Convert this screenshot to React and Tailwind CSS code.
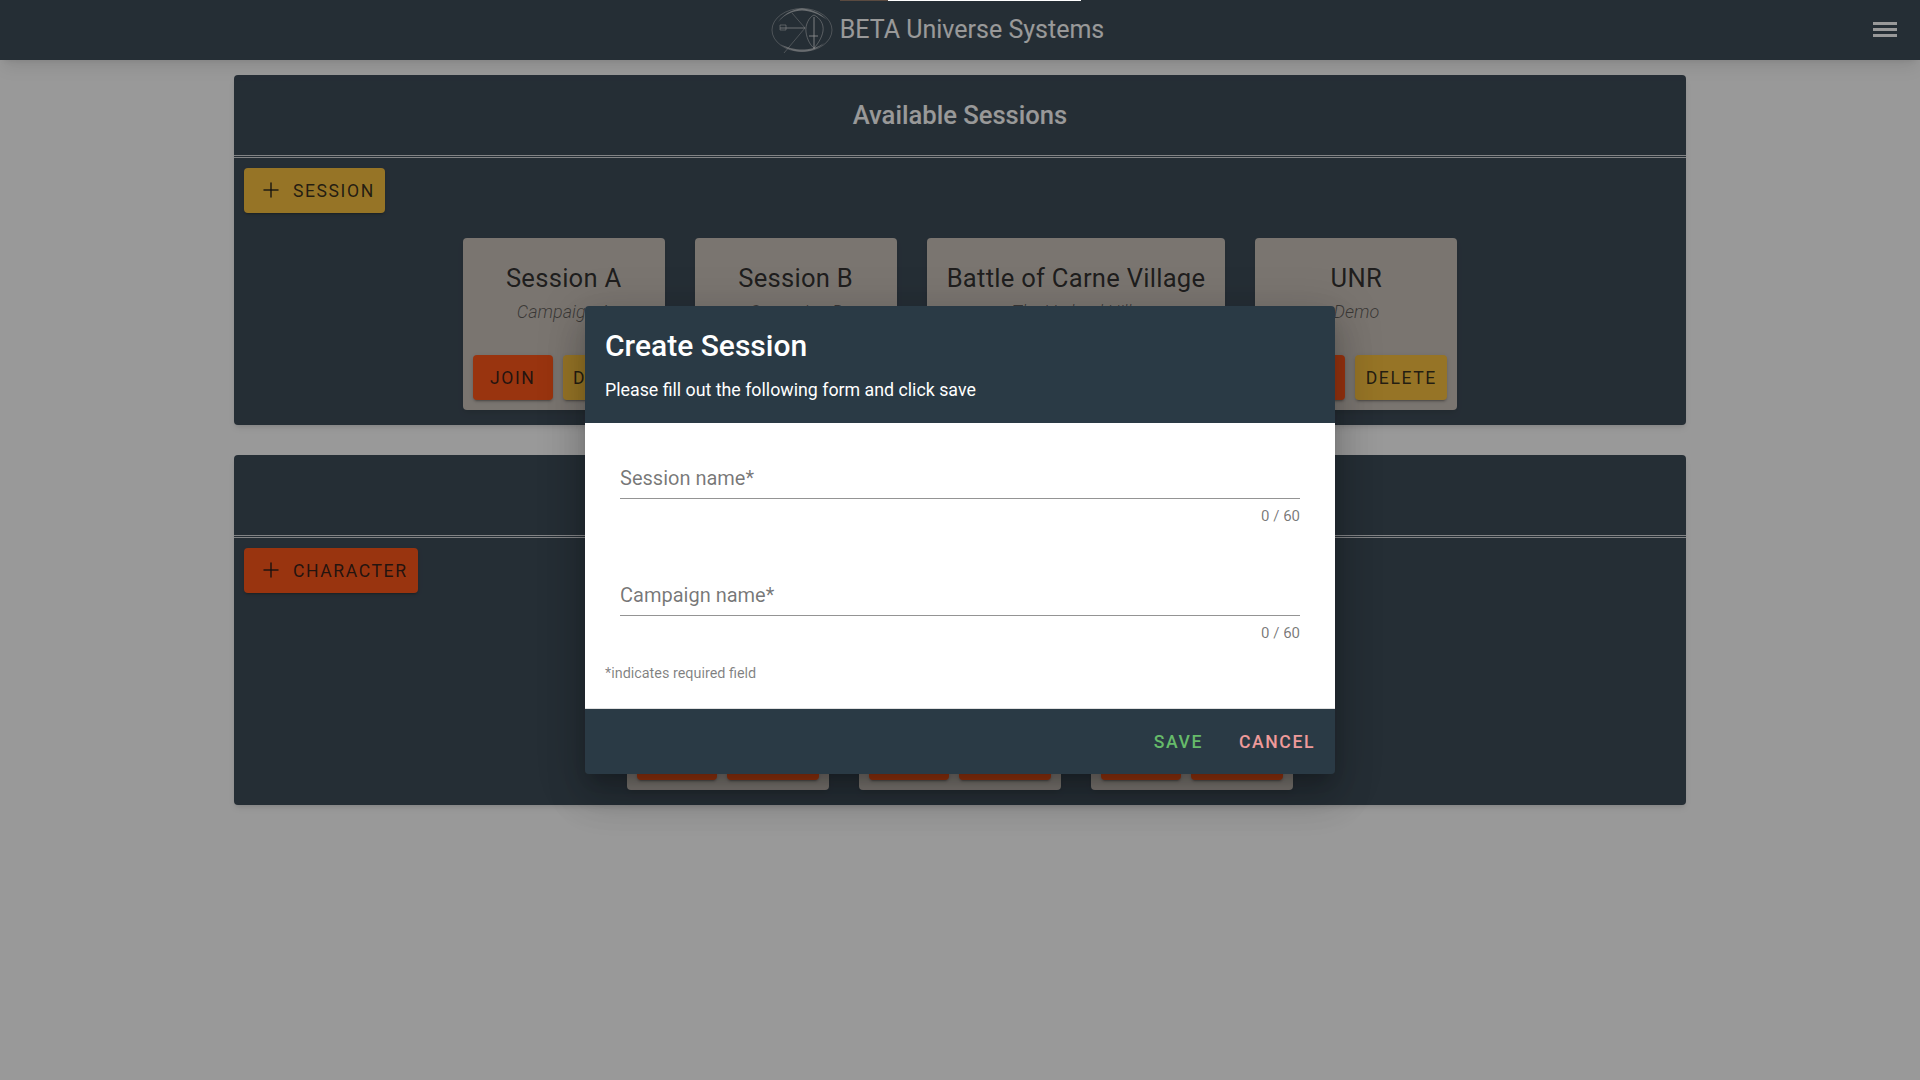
import { Plus } from 'lucide-react'

const sessions = [
    { title: 'Session A', sub: 'Campaign A' },
    { title: 'Session B', sub: 'Campaign B' },
    { title: 'Battle of Carne Village', sub: 'The Verland Hills' },
    { title: 'UNR', sub: 'Demo' },
]

function Btn({ color, children, className = '' }) {
    return (
        <button className={`h-[45px] pt-[1px] rounded flex items-center text-[17.6px] font-normal tracking-[0.0892857em] text-black/87 shadow-[0_3px_1px_-2px_rgba(0,0,0,0.2),0_2px_2px_0_rgba(0,0,0,0.14),0_1px_5px_0_rgba(0,0,0,0.12)] ${color} ${className}`}>
            {children}
        </button>
    )
}

function Card({ title, sub, second = 'bg-[#fabb2c]' }) {
    return (
        <div className="h-[172px] min-w-[202px] p-[10px] rounded bg-[#c6bdb4] flex flex-col items-center shadow-md">
            <div className="mt-[14px] px-[10px] h-[32px] text-[25.6px] leading-[32px] font-normal tracking-[0.01em] text-black/87 whitespace-nowrap">{title}</div>
            <div className="mt-[6px] text-[18px] leading-[24px] font-light italic text-black/60">{sub}</div>
            <div className="mt-auto flex gap-[10px] self-start">
                <Btn color="bg-[#ff4500]" className="w-[80px] justify-center">JOIN</Btn>
                <Btn color={second} className="w-[92px] justify-center">DELETE</Btn>
            </div>
        </div>
    )
}

function Panel({ title, action, children }) {
    return (
        <section className="h-[350px] rounded bg-[#2a3a47] shadow-md flex flex-col">
            <div className="h-[80px] pt-[1px] flex items-center justify-center text-[25.6px] font-medium text-white">{title}</div>
            <div className="h-[3px] border-y border-[#ffffff] opacity-80" />
            <div className="pl-[10px] pt-[10px]">{action}</div>
            <div className="mt-[25px] flex justify-center gap-[30px]">{children}</div>
        </section>
    )
}

function Field({ label }) {
    return (
        <div className="mx-[15px]">
            <div className="h-[48px] flex items-end pb-[6px] border-b border-black/42 text-[20px] leading-[28px] text-black/54">{label}</div>
            <div className="mt-[8px] text-right text-[15px] leading-[18px] text-black/54">0 / 60</div>
        </div>
    )
}

function Logo() {
    return (
        <svg width="62" height="46" viewBox="0 0 62 46" fill="none" stroke="#ffffff" className="mr-[7px]">
            <ellipse cx="31" cy="23" rx="30" ry="21.5" strokeWidth="0.7" strokeOpacity="0.5" />
            <path d="M7 15C14 5 25 1.5 31 1.5S49 5 56 13C48 7 39 3.5 31 3.5S14 7 7 15Z" fill="#ffffff" fillOpacity="0.6" stroke="none" />
            <path d="M9 37C17 43 25 44.5 31 44.5S46 43 53 36C46 41 38 42.5 31 42.5S17 41 9 37Z" fill="#ffffff" fillOpacity="0.55" stroke="none" />
            <path d="M21 6L34 21L13 46" strokeWidth="0.6" strokeOpacity="0.6" />
            <path d="M9 21H34" strokeWidth="0.9" strokeOpacity="0.7" />
            <path d="M9 18H15V23H9Z" strokeWidth="1" strokeOpacity="0.45" />
            <path d="M43 8C49 11 53 17 52 24C51 31 46 38 43 41C40 39 36 33 35 25C34 18 38 10 43 8Z" strokeWidth="0.7" strokeOpacity="0.65" />
            <path d="M43 10V42M38 29H47" strokeWidth="1" strokeOpacity="0.75" />
        </svg>
    )
}

export default function App() {
    return (
        <div className="relative min-h-screen overflow-hidden bg-white font-['Roboto',sans-serif]">
            <header className="h-[60px] pr-[45px] bg-[#2a3a47] shadow-lg flex items-center justify-center relative">
                <Logo />
                <span className="text-[25px] text-white">BETA Universe Systems</span>
                <svg className="absolute right-[23px] top-[22px]" width="24" height="15" viewBox="0 0 24 15" fill="#ffffff">
                    <rect width="24" height="3" />
                    <rect y="6" width="24" height="3" />
                    <rect y="12" width="24" height="3" />
                </svg>
            </header>

            <main className="w-[1452px] mx-auto pt-[15px] flex flex-col gap-[30px]">
                <Panel title="Available Sessions" action={
                    <Btn color="bg-[#fabb2c]" className="w-[141px] pl-[15px]"><Plus className="w-6 h-6 mr-[10px] -mt-[2px]" strokeWidth={1.5} />SESSION</Btn>
                }>
                    {sessions.map(s => <Card key={s.title} {...s} />)}
                </Panel>
                <Panel title="Available Characters" action={
                    <Btn color="bg-[#ff4500]" className="w-[174px] pl-[15px]"><Plus className="w-6 h-6 mr-[10px] -mt-[2px]" strokeWidth={1.5} />CHARACTER</Btn>
                }>
                    {[0, 1, 2].map(i => <Card key={i} title="" sub="" second="bg-[#ff4500]" />)}
                </Panel>
            </main>

            {/* dialog + scrim */}
            <div className="absolute inset-0 flex items-center justify-center">
                <div className="absolute inset-0 bg-[#212121]/46" />
                <div className="absolute top-0 left-[840px] h-px w-[48px] bg-[#5a4a40]" />
                <div className="absolute top-0 left-[888px] h-px w-[193px] bg-white" />
                <div className="relative w-[750px] h-[468px] rounded flex flex-col overflow-hidden shadow-[0_11px_15px_-7px_rgba(0,0,0,0.2),0_24px_38px_3px_rgba(0,0,0,0.14),0_9px_46px_8px_rgba(0,0,0,0.12)]">
                    <div className="h-[117px] bg-[#2a3a45] px-[20px] text-white">
                        <h2 className="mt-[20px] text-[30px] leading-[40px] font-medium">Create Session</h2>
                        <p className="mt-[12px] text-[17.8px] leading-[24px]">Please fill out the following form and click save</p>
                    </div>
                    <div className="h-[286px] bg-white border-b border-[#e0e0e0] px-[20px] pt-[28px]">
                        <Field label="Session name*" />
                        <div className="h-[43px]" />
                        <Field label="Campaign name*" />
                        <div className="mt-[23px] text-[14.4px] leading-[18px] text-black/50">*indicates required field</div>
                    </div>
                    <div className="h-[65px] pt-[2px] bg-[#2a3a45] flex items-center justify-end gap-[36px] pr-[20px] text-[17.6px] font-medium tracking-[0.0892857em]">
                        <span className="text-[#66bb6a]">SAVE</span>
                        <span className="text-[#ef9a9a]">CANCEL</span>
                    </div>
                </div>
            </div>
        </div>
    )
}
